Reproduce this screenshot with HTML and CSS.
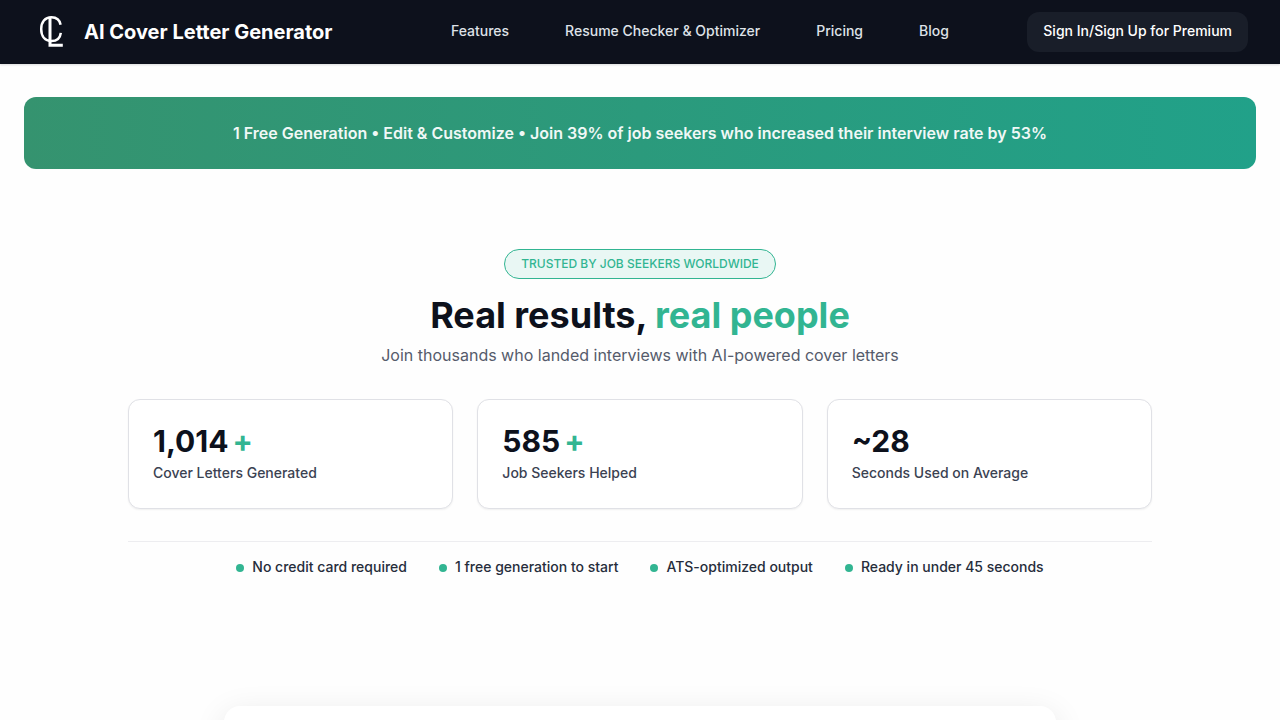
FILE: index.html
```html
<!DOCTYPE html>
<html lang="en">
<head>
    <meta charset="UTF-8">
    <meta name="viewport" content="width=device-width, initial-scale=1.0">
    <title>AI Cover Letter Generator</title>
    <link rel="stylesheet" href="styles.css">
</head>
<body>

    <header class="header">
        <a class="brand" href="#">
            <svg class="logo" viewBox="0 0 36 36" fill="none" stroke="#fff" aria-hidden="true">
                <path d="M28.6 10.8 C27.8 6.2 24.4 3.2 19.4 3.2 C13 3.2 9.2 8 9.2 15 C9.2 22.2 13 27 19.4 27 C24.6 27 28.2 24 28.8 18.8" stroke-width="2.5"/>
                <path d="M18 3.4 V31.2 H30.8" stroke-width="3"/>
            </svg>
            <span>AI Cover Letter Generator</span>
        </a>
        <nav class="nav">
            <a href="#">Features</a>
            <a href="#">Resume Checker &amp; Optimizer</a>
            <a href="#">Pricing</a>
            <a href="#">Blog</a>
        </nav>
        <button class="sign-in" type="button">Sign In/Sign Up for Premium</button>
    </header>

    <main>
        <div class="banner">1 Free Generation • Edit &amp; Customize • Join 39% of job seekers who increased their interview rate by 53%</div>

        <section class="results">
            <div class="pill">TRUSTED BY JOB SEEKERS WORLDWIDE</div>
            <h1>Real results, <span class="accent">real people</span></h1>
            <p class="subtitle">Join thousands who landed interviews with AI-powered cover letters</p>

            <div class="stats">
                <div class="stat">
                    <div class="number">1,014<span class="accent plus">+</span></div>
                    <div class="label">Cover Letters Generated</div>
                </div>
                <div class="stat">
                    <div class="number">585<span class="accent plus">+</span></div>
                    <div class="label">Job Seekers Helped</div>
                </div>
                <div class="stat">
                    <div class="number">~28</div>
                    <div class="label">Seconds Used on Average</div>
                </div>
            </div>

            <ul class="perks">
                <li>No credit card required</li>
                <li>1 free generation to start</li>
                <li>ATS-optimized output</li>
                <li>Ready in under 45 seconds</li>
            </ul>
        </section>

        <section class="panel"></section>
    </main>

</body>
</html>
```

FILE: styles.css
```css
* {
    box-sizing: border-box;
}
body {
    margin: 0;
    font-family: Inter, sans-serif;
    background-color: #fefefe;
    color: #0d111c;
}
a {
    color: inherit;
    text-decoration: none;
}
.header {
    display: flex;
    justify-content: space-between;
    align-items: center;
    height: 64px;
    padding: 0 32px;
    background: #0d111c;
    color: #fff;
    box-shadow: 0 1px 2px rgba(13, 17, 28, 0.15);
}
.brand {
    display: flex;
    align-items: center;
    gap: 16px;
    padding-right: 40px;
    font-size: 20px;
    font-weight: 700;
}
.logo {
    width: 36px;
    height: 36px;
}
.nav {
    display: flex;
    gap: 32px;
}
.nav a {
    padding: 8px 12px 10px;
    font-size: 14px;
    font-weight: 500;
    line-height: 20px;
    color: #dfe2e8;
}
.sign-in {
    height: 40px;
    padding: 0 16px 4px;
    border: none;
    border-radius: 12px;
    background: #191e29;
    color: #fff;
    font-family: inherit;
    font-size: 14px;
    font-weight: 500;
    cursor: pointer;
}
.banner {
    margin: 33px 24px 0;
    padding: 24px;
    border-radius: 12px;
    background: linear-gradient(90deg, #35936f, #21a189);
    color: #f0f8f6;
    font-size: 16px;
    font-weight: 600;
    line-height: 24px;
    text-align: center;
}
.results {
    max-width: 1024px;
    margin: 80px auto 0;
    text-align: center;
}
.pill {
    display: inline-block;
    padding: 6px 16px;
    border: 1px solid #32b592;
    border-radius: 16px;
    background: #e9f7f4;
    color: #32b592;
    font-size: 12px;
    font-weight: 500;
    line-height: 16px;
    vertical-align: top;
}
h1 {
    margin: 16px 0 8px;
    font-size: 36px;
    font-weight: 700;
    line-height: 40px;
}
.accent {
    color: #32b592;
}
.subtitle {
    margin: 0 0 32px;
    color: #555b6b;
    font-size: 16px;
    line-height: 24px;
}
.stats {
    display: grid;
    grid-template-columns: repeat(3, 1fr);
    gap: 24px;
    text-align: left;
}
.stat {
    padding: 23px 24px 25px;
    border: 1px solid #e0e1e6;
    border-radius: 12px;
    background: #fff;
    box-shadow: 0 1px 2px rgba(0, 0, 0, 0.06);
}
.number {
    font-size: 30px;
    font-weight: 700;
    line-height: 36px;
}
.plus {
    margin-left: 4px;
}
.label {
    margin-top: 4px;
    color: #3b4252;
    font-size: 14px;
    font-weight: 500;
    line-height: 20px;
}
.perks {
    display: flex;
    justify-content: center;
    flex-wrap: wrap;
    gap: 12px 32px;
    margin: 32px 0 0;
    padding: 15px 0 0;
    border-top: 1px solid #ededf0;
    list-style: none;
    color: #262d3b;
    font-size: 14px;
    font-weight: 500;
    line-height: 20px;
}
.perks li {
    display: flex;
    align-items: center;
    gap: 8px;
}
.perks li::before {
    content: "";
    width: 8px;
    height: 8px;
    margin-top: 2px;
    border-radius: 50%;
    background: #32b592;
}
.panel {
    max-width: 832px;
    min-height: 320px;
    margin: 129px auto 64px;
    border-radius: 16px;
    background: #fff;
    box-shadow: 0 8px 32px rgba(0, 0, 0, 0.1);
}
```
